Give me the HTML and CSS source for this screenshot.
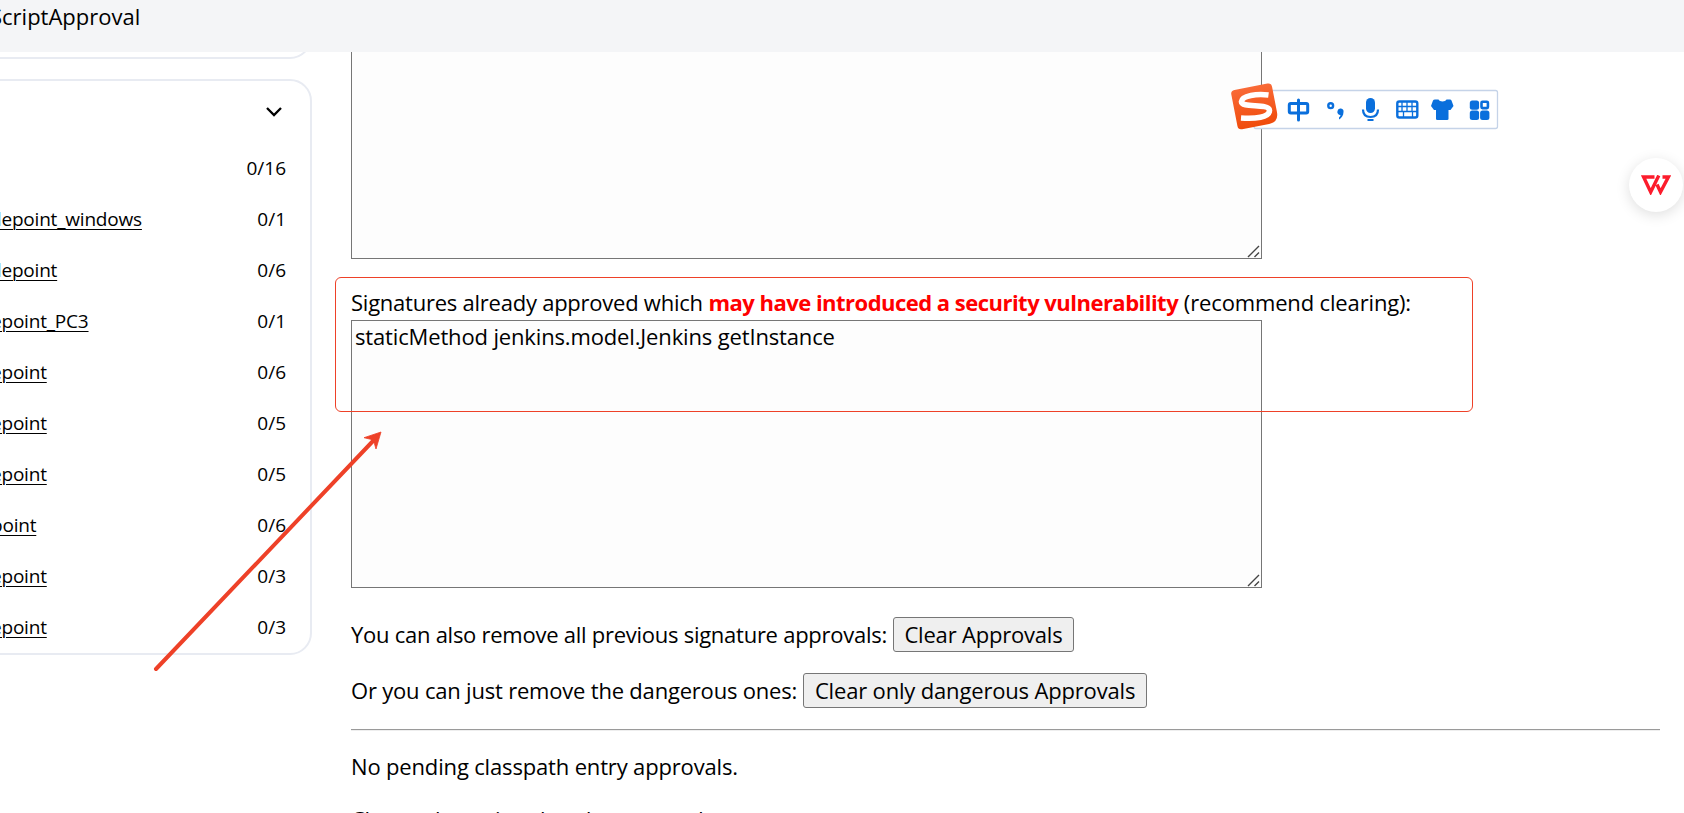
FILE: index.html
```
<!DOCTYPE html>
<html lang="en">
  <head>
    <meta charset="UTF-8" />
    <meta name="viewport" content="width=device-width, initial-scale=1.0" />
    <title>ScriptApproval</title>
    <link rel="stylesheet" href="styles.css">
  </head>
  <body>
    <header class="breadcrumbs"><span class="crumb">ScriptApproval</span></header>
    <div class="page">
      <aside class="sidebar">
        <div class="card cardTop"></div>
        <div class="card executors">
          <div class="cardHead">
            <svg width="18" height="12" viewBox="0 0 18 12"><path d="M2 2l7 7 7-7" fill="none" stroke="#000" stroke-width="2.3" /></svg>
          </div>
          <div class="row"><span></span><span class="count">0/16</span></div>
          <div class="row"><a class="name cutD">depoint_windows</a><span class="count">0/1</span></div>
          <div class="row"><a class="name cutD">depoint</a><span class="count">0/6</span></div>
          <div class="row"><a class="name cutE">epoint_PC3</a><span class="count">0/1</span></div>
          <div class="row"><a class="name cutE">epoint</a><span class="count">0/6</span></div>
          <div class="row"><a class="name cutE">epoint</a><span class="count">0/5</span></div>
          <div class="row"><a class="name cutE">epoint</a><span class="count">0/5</span></div>
          <div class="row"><a class="name cutP">point</a><span class="count">0/6</span></div>
          <div class="row"><a class="name cutE">epoint</a><span class="count">0/3</span></div>
          <div class="row"><a class="name cutE">epoint</a><span class="count">0/3</span></div>
        </div>
      </aside>
      <main class="main">
        <div class="boxWrap boxTop">
          <textarea class="box"></textarea>
          <svg class="grip" width="13" height="13" viewBox="0 0 13 13"><path d="M1 12L12 1M7.500 12L12 7.500" /></svg>
        </div>
        <p class="label"><span class="t1">Signatures already approved which</span> <b class="danger">may have introduced a security vulnerability</b> <span class="t2">(recommend clearing):</span></p>
        <div class="boxWrap boxDanger">
          <textarea class="box">staticMethod jenkins.model.Jenkins getInstance</textarea>
          <svg class="grip" width="13" height="13" viewBox="0 0 13 13"><path d="M1 12L12 1M7.500 12L12 7.500" /></svg>
        </div>
        <div class="line"><span class="t3">You can also remove all previous signature approvals:</span><button class="btn btnAll">Clear Approvals</button></div>
        <div class="line"><span class="t4">Or you can just remove the dangerous ones:</span><button class="btn btnDanger">Clear only dangerous Approvals</button></div>
        <hr class="rule" />
        <p class="note">No pending classpath entry approvals.</p>
        <p class="note noteLast">Classpath entries already approved:</p>
      </main>
    </div>

    <!-- annotation frame and arrow -->
    <div class="frame"></div>
    <svg class="arrow" width="240" height="250" viewBox="0 0 240 250">
      <path d="M6 239L223 11" stroke="#ee4128" stroke-width="4" stroke-linecap="round" />
      <path d="M231 2L214 7.700L220.700 9.300L224.300 13.300L226 19z" fill="#ee4128" stroke="#ee4128" stroke-width="0.800" />
    </svg>

    <!-- input method bar -->
    <div class="ime">
      <svg width="270" height="50" viewBox="0 0 270 50">
        <defs>
          <linearGradient id="orange" x1="0" y1="0" x2="0" y2="1">
            <stop offset="0" stop-color="#f96a37" />
            <stop offset="1" stop-color="#f04c0c" />
          </linearGradient>
        </defs>
        <rect x="24" y="8.500" width="243.500" height="38" rx="2" fill="#fff" stroke="#c5d3e8" stroke-width="1.300" />
        <path d="M8 4.500H41.500a4 4 0 0 1 4 4V34q0 10.500-10 10.500H8a4 4 0 0 1-4-4V8.500a4 4 0 0 1 4-4z" fill="url(#orange)" transform="rotate(-11 24 24.500)" />
        <path d="M38.500 13C27 11.500 12 13.500 11.500 19.500C11 26.500 39.500 21 39.500 28.500C39.500 35.500 25 37 11 36" fill="none" stroke="#fff" stroke-width="5.600" />
        <g fill="none" stroke="#0a6fdc" stroke-width="3">
          <rect x="59.300" y="21.500" width="18.400" height="9.500" rx="1.500" />
          <path d="M68.500 18v20" stroke-linecap="round" />
          <circle cx="100.700" cy="23.700" r="2.400" stroke-width="2.400" />
          <path d="M133 27.500c0 5 3 7.500 7.500 7.500s7.500-2.500 7.500-7.500M137.500 38h6" stroke-width="2.200" />
          <rect x="167.300" y="19.500" width="20" height="16" rx="2" stroke-width="2.400" />
          <path d="M168 24.500h19M168 29.500h19M172 20v10M177 20v10M182 20v10M173.500 30v5M182.500 30v5" stroke-width="1.300" />
          <rect x="251.500" y="19.700" width="6.400" height="6.400" rx="1" stroke-width="2.600" />
        </g>
        <g fill="#0a6fdc">
          <path d="M107.500 29a3 3 0 0 1 6 1c0 3.500-2 6-4.500 7.500v-2c1-.8 1.500-1.600 1.500-2.500a3 3 0 0 1-3-4z" />
          <rect x="136" y="16" width="9" height="15" rx="4.500" />
          <path d="M205 17.500h3.500c1 2.500 7 2.500 8 0h3.500q1 0 1.500 1l2 5.500-3 4h-2v9q0 1-1.500 1h-9.500q-1.500 0-1.500-1v-9h-2l-3-4 2-5.500q.5-1 2-1z" />
          <rect x="239.800" y="18.400" width="9.300" height="9.300" rx="2.500" />
          <rect x="239.800" y="28.600" width="9.300" height="9.300" rx="2.500" />
          <rect x="250.100" y="28.600" width="9.300" height="9.300" rx="2.500" />
        </g>
      </svg>
    </div>

    <div class="wps">
      <svg width="30" height="20" viewBox="0 0 30 20">
        <path d="M13.500 2H2.600L9.700 17L17.800 0.500M21.500 2H27.400L19.500 17L16 9.500" fill="none" stroke="#fc1c2c" stroke-width="3.400" />
      </svg>
    </div>
  </body>
</html>
```
FILE: styles.css
```
* {
  margin: 0;
  padding: 0;
  box-sizing: border-box;
}
body {
  width: 1684px;
  height: 813px;
  overflow: hidden;
  position: relative;
  background: #fff;
  color: #000;
  font-family: "Open Sans", "Noto Sans", sans-serif;
  font-size: 22px;
}
.breadcrumbs {
  height: 52px;
  background: #f4f5f7;
  overflow: hidden;
}
.crumb {
  display: block;
  margin-left: -10px;
  line-height: 32px;
}
.page {
  display: flex;
  height: 761px;
  overflow: hidden;
}
.sidebar {
  width: 351px;
  flex-shrink: 0;
}
.card {
  width: 332px;
  margin-left: -20px;
  border: 2px solid #e8ebf2;
  border-radius: 22px;
}
.cardTop {
  height: 50px;
  margin-top: -43px;
}
.executors {
  height: 576px;
  margin-top: 20px;
  padding: 0 24px 0 18px;
}
.cardHead {
  height: 62px;
  display: flex;
  justify-content: flex-end;
  align-items: center;
  padding-right: 3px;
}
.row {
  height: 51px;
  padding-bottom: 2px;
  display: flex;
  justify-content: space-between;
  align-items: center;
  font-size: 19px;
}
.name {
  letter-spacing: -0.2px;
  text-decoration: underline;
  text-underline-offset: 3px;
  text-decoration-thickness: 1px;
  text-decoration-skip-ink: auto;
}
.cutD {
  margin-left: -10px;
}
.cutE {
  margin-left: -9px;
}
.cutP {
  margin-left: -9px;
}
.main {
  flex: 1;
}
.boxWrap {
  position: relative;
  width: 911px;
  height: 268px;
}
.box {
  display: block;
  width: 100%;
  height: 100%;
  border: 1px solid #767676;
  background: #fdfdfd;
  color: #000;
  font-family: inherit;
  font-size: 22px;
  line-height: 30px;
  letter-spacing: -0.15px;
  padding: 0 3px;
  resize: none;
}
.grip {
  position: absolute;
  right: 2px;
  bottom: 1px;
  fill: none;
  stroke: #444;
  stroke-width: 1.4;
}
.boxTop {
  margin-top: -61px;
}
.label {
  height: 61px;
  padding-top: 28px;
  line-height: 30px;
  white-space: nowrap;
}
.t1 {
  letter-spacing: -0.24px;
}
.danger {
  color: #f00;
  letter-spacing: -0.52px;
}
.t2 {
  letter-spacing: -0.15px;
}
.t3 {
  letter-spacing: -0.26px;
}
.t4 {
  letter-spacing: -0.2px;
}
.line {
  height: 35px;
  margin-bottom: 21px;
  display: flex;
  align-items: center;
  white-space: nowrap;
}
.line span {
  padding-bottom: 1px;
}
.boxDanger {
  margin-bottom: 29px;
}
.btn {
  height: 35px;
  margin-left: 6px;
  padding-bottom: 1px;
  border: 1px solid #767676;
  border-radius: 3px;
  background: #efefef;
  color: #000;
  font-family: inherit;
  font-size: 22px;
  line-height: 30px;
  letter-spacing: -0.2px;
  white-space: nowrap;
}
.btnAll {
  width: 181px;
}
.btnDanger {
  width: 344px;
  letter-spacing: -0.17px;
}
.rule {
  width: 1309px;
  border: none;
  border-top: 1px solid #9a9a9a;
  border-bottom: 1px solid #eee;
}
.note {
  margin-top: 20px;
  line-height: 30px;
  letter-spacing: -0.16px;
}
.noteLast {
  margin-top: 23px;
  letter-spacing: -0.28px;
}
.frame {
  position: absolute;
  left: 335px;
  top: 277px;
  width: 1138px;
  height: 135px;
  border: 1px solid #ee4128;
  border-radius: 6px;
}
.arrow {
  position: absolute;
  left: 150px;
  top: 430px;
}
.ime {
  position: absolute;
  left: 1230px;
  top: 82px;
}
.wps {
  position: absolute;
  left: 1629px;
  top: 158px;
  width: 54px;
  height: 54px;
  display: flex;
  justify-content: center;
  align-items: center;
  border-radius: 50%;
  background: #fff;
  box-shadow: 0 3px 14px rgba(0, 0, 0, 0.13);
}
```
